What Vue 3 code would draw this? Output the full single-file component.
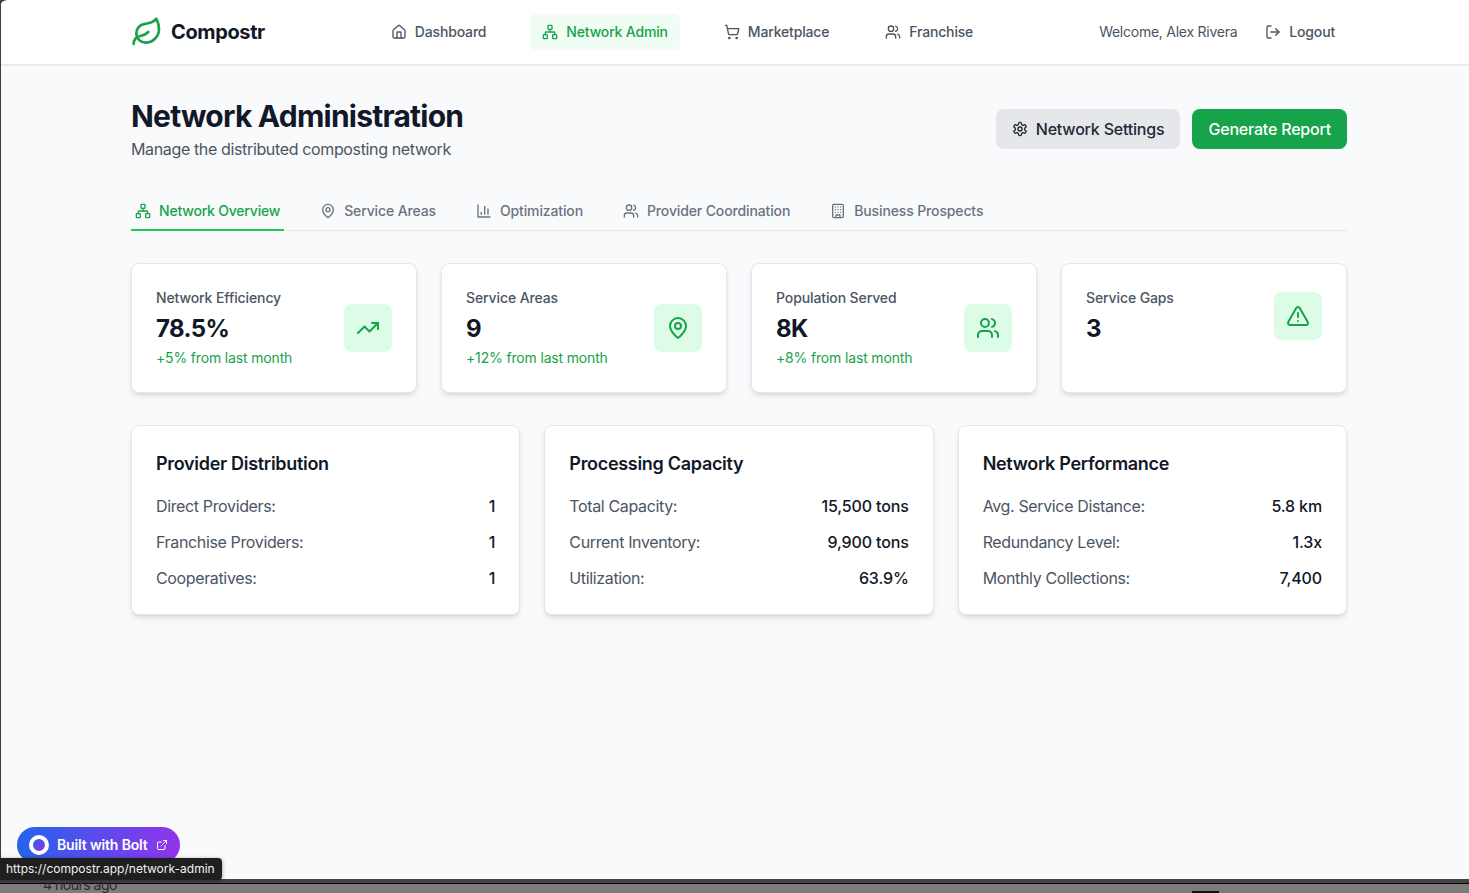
<script setup>
const icons = {
  leaf: '<path d="M11 20A7 7 0 0 1 9.8 6.1C15.5 5 17 4.48 19 2c1 2 2 4.18 2 8 0 5.5-4.78 10-10 10Z"/><path d="M2 21c0-3 1.85-5.36 5.08-6C9.5 14.52 12 13 13 12"/>',
  home: '<path d="M15 21v-8a1 1 0 0 0-1-1h-4a1 1 0 0 0-1 1v8"/><path d="M3 10a2 2 0 0 1 .709-1.528l7-5.999a2 2 0 0 1 2.582 0l7 5.999A2 2 0 0 1 21 10v9a2 2 0 0 1-2 2H5a2 2 0 0 1-2-2z"/>',
  network: '<rect x="16" y="16" width="6" height="6" rx="1"/><rect x="2" y="16" width="6" height="6" rx="1"/><rect x="9" y="2" width="6" height="6" rx="1"/><path d="M5 16v-3a1 1 0 0 1 1-1h12a1 1 0 0 1 1 1v3"/><path d="M12 12V8"/>',
  cart: '<circle cx="8" cy="21" r="1"/><circle cx="19" cy="21" r="1"/><path d="M2.05 2.05h2l2.66 12.42a2 2 0 0 0 2 1.58h9.78a2 2 0 0 0 1.95-1.57l1.65-7.43H5.12"/>',
  users: '<path d="M16 21v-2a4 4 0 0 0-4-4H6a4 4 0 0 0-4 4v2"/><circle cx="9" cy="7" r="4"/><path d="M22 21v-2a4 4 0 0 0-3-3.87"/><path d="M16 3.13a4 4 0 0 1 0 7.75"/>',
  logout: '<path d="M9 21H5a2 2 0 0 1-2-2V5a2 2 0 0 1 2-2h4"/><polyline points="16 17 21 12 16 7"/><line x1="21" y1="12" x2="9" y2="12"/>',
  settings: '<path d="M12.22 2h-.44a2 2 0 0 0-2 2v.18a2 2 0 0 1-1 1.73l-.43.25a2 2 0 0 1-2 0l-.15-.08a2 2 0 0 0-2.73.73l-.22.38a2 2 0 0 0 .73 2.73l.15.1a2 2 0 0 1 1 1.72v.51a2 2 0 0 1-1 1.74l-.15.09a2 2 0 0 0-.73 2.73l.22.38a2 2 0 0 0 2.73.73l.15-.08a2 2 0 0 1 2 0l.43.25a2 2 0 0 1 1 1.73V20a2 2 0 0 0 2 2h.44a2 2 0 0 0 2-2v-.18a2 2 0 0 1 1-1.73l.43-.25a2 2 0 0 1 2 0l.15.08a2 2 0 0 0 2.73-.73l.22-.39a2 2 0 0 0-.73-2.73l-.15-.08a2 2 0 0 1-1-1.74v-.5a2 2 0 0 1 1-1.74l.15-.09a2 2 0 0 0 .73-2.73l-.22-.38a2 2 0 0 0-2.73-.73l-.15.08a2 2 0 0 1-2 0l-.43-.25a2 2 0 0 1-1-1.73V4a2 2 0 0 0-2-2z"/><circle cx="12" cy="12" r="3"/>',
  pin: '<path d="M20 10c0 6-8 12-8 12s-8-6-8-12a8 8 0 0 1 16 0Z"/><circle cx="12" cy="10" r="3"/>',
  chart: '<path d="M3 3v18h18"/><path d="M8 17v-3"/><path d="M13 17V5"/><path d="M18 17V9"/>',
  building: '<rect x="4" y="2" width="16" height="20" rx="2"/><path d="M9 22v-4h6v4"/><path d="M8 6h.01M16 6h.01M12 6h.01M12 10h.01M12 14h.01M16 10h.01M16 14h.01M8 10h.01M8 14h.01"/>',
  trend: '<polyline points="22 7 13.5 15.5 8.5 10.5 2 17"/><polyline points="16 7 22 7 22 13"/>',
  alert: '<path d="m21.73 18-8-14a2 2 0 0 0-3.48 0l-8 14A2 2 0 0 0 4 21h16a2 2 0 0 0 1.73-3"/><path d="M12 9v4"/><path d="M12 17h.01"/>',
  external: '<path d="M15 3h6v6"/><path d="M10 14 21 3"/><path d="M18 13v6a2 2 0 0 1-2 2H5a2 2 0 0 1-2-2V8a2 2 0 0 1 2-2h6"/>'
}

const navLinks = [
  { label: 'Dashboard', icon: 'home' },
  { label: 'Network Admin', icon: 'network', active: true },
  { label: 'Marketplace', icon: 'cart' },
  { label: 'Franchise', icon: 'users' }
]

const tabs = [
  { label: 'Network Overview', icon: 'network', active: true },
  { label: 'Service Areas', icon: 'pin' },
  { label: 'Optimization', icon: 'chart' },
  { label: 'Provider Coordination', icon: 'users' },
  { label: 'Business Prospects', icon: 'building' }
]

const stats = [
  { label: 'Network Efficiency', value: '78.5%', note: '+5% from last month', icon: 'trend' },
  { label: 'Service Areas', value: '9', note: '+12% from last month', icon: 'pin' },
  { label: 'Population Served', value: '8K', note: '+8% from last month', icon: 'users' },
  { label: 'Service Gaps', value: '3', icon: 'alert' }
]

const panels = [
  { title: 'Provider Distribution', rows: [['Direct Providers:', '1'], ['Franchise Providers:', '1'], ['Cooperatives:', '1']] },
  { title: 'Processing Capacity', rows: [['Total Capacity:', '15,500 tons'], ['Current Inventory:', '9,900 tons'], ['Utilization:', '63.9%']] },
  { title: 'Network Performance', rows: [['Avg. Service Distance:', '5.8 km'], ['Redundancy Level:', '1.3x'], ['Monthly Collections:', '7,400']] }
]
</script>

<template>
  <div class="page">
    <header class="topbar">
      <div class="container bar-row">
        <div class="brand">
          <svg class="icon brand-icon" viewBox="0 0 24 24" v-html="icons.leaf"></svg>
          <span>Compostr</span>
        </div>
        <nav class="nav">
          <a v-for="l in navLinks" :key="l.label" class="nav-link" :class="{ active: l.active }">
            <svg class="icon i16" viewBox="0 0 24 24" v-html="icons[l.icon]"></svg>
            {{ l.label }}
          </a>
        </nav>
        <div class="user">
          <span class="welcome">Welcome, Alex Rivera</span>
          <a class="nav-link">
            <svg class="icon i16" viewBox="0 0 24 24" v-html="icons.logout"></svg>
            Logout
          </a>
        </div>
      </div>
    </header>

    <main class="container main">
      <section class="heading">
        <div>
          <h1>Network Administration</h1>
          <p>Manage the distributed composting network</p>
        </div>
        <div class="actions">
          <button class="btn btn-gray">
            <svg class="icon i16" viewBox="0 0 24 24" v-html="icons.settings"></svg>
            Network Settings
          </button>
          <button class="btn btn-green">Generate Report</button>
        </div>
      </section>

      <div class="tabs">
        <a v-for="t in tabs" :key="t.label" class="tab" :class="{ active: t.active }">
          <svg class="icon i16" viewBox="0 0 24 24" v-html="icons[t.icon]"></svg>
          {{ t.label }}
        </a>
      </div>

      <section class="stats">
        <article v-for="s in stats" :key="s.label" class="card stat">
          <div class="stat-text">
            <div class="stat-label">{{ s.label }}</div>
            <div class="stat-value">{{ s.value }}</div>
            <div v-if="s.note" class="stat-note">{{ s.note }}</div>
          </div>
          <div class="stat-icon" :class="{ top: !s.note }">
            <svg class="icon i24" viewBox="0 0 24 24" v-html="icons[s.icon]"></svg>
          </div>
        </article>
      </section>

      <section class="panels">
        <article v-for="p in panels" :key="p.title" class="card panel">
          <h3>{{ p.title }}</h3>
          <div class="rows">
            <div v-for="r in p.rows" :key="r[0]" class="row">
              <span>{{ r[0] }}</span>
              <strong>{{ r[1] }}</strong>
            </div>
          </div>
        </article>
      </section>
    </main>

    <div class="bolt">
      <span class="bolt-dot"></span>
      <span class="bolt-text">Built with Bolt</span>
      <svg class="icon i12" viewBox="0 0 24 24" v-html="icons.external"></svg>
    </div>

    <div class="window-edge"></div>
    <div class="window-corner"></div>
    <div class="below">
      <span>4 hours ago</span>
      <i class="below-mark"></i>
    </div>
    <div class="status-url">https://compostr.app/network-admin</div>
  </div>
</template>

<style scoped>
.page {
  position: relative;
  height: 893px;
  overflow: hidden;
  background: #f9fafb;
  font-family: Inter, "Liberation Sans", sans-serif;
  color: #111827;
}
.container {
  box-sizing: border-box;
  width: 1280px;
  margin-left: 99px;
  padding: 0 32px;
}
.icon {
  flex: none;
  fill: none;
  stroke: currentColor;
  stroke-width: 2;
  stroke-linecap: round;
  stroke-linejoin: round;
}
.i12 { width: 12px; height: 12px; }
.i16 { width: 16px; height: 16px; }
.i24 { width: 24px; height: 24px; }

.topbar {
  height: 65px;
  box-sizing: border-box;
  background: #fff;
  border-bottom: 1px solid #e5e7eb;
  box-shadow: 0 1px 2px rgba(0, 0, 0, .05);
}
.bar-row {
  display: flex;
  align-items: center;
  justify-content: space-between;
  height: 64px;
}
.brand {
  display: flex;
  align-items: center;
  gap: 8px;
  font-size: 20px;
  line-height: 28px;
  font-weight: 700;
  letter-spacing: -0.37px;
}
.brand-icon { width: 32px; height: 32px; color: #16a34a; }
.nav { display: flex; gap: 32px; }
.nav-link {
  display: flex;
  align-items: center;
  gap: 8px;
  box-sizing: border-box;
  height: 36px;
  padding: 0 12px 1px;
  border-radius: 6px;
  font-size: 14px;
  font-weight: 500;
  letter-spacing: -0.17px;
  color: #4b5563;
}
.nav-link.active { background: #f0fdf4; color: #16a34a; }
.user {
  display: flex;
  align-items: center;
  gap: 16px;
  font-size: 14px;
  color: #4b5563;
}
.welcome { letter-spacing: -0.25px; padding-bottom: 1px; }

.main { padding-top: 32px; }
.heading {
  display: flex;
  align-items: center;
  justify-content: space-between;
  margin-bottom: 32px;
}
h1 {
  margin: 0;
  font-size: 30px;
  line-height: 38px;
  font-weight: 700;
  letter-spacing: -0.77px;
}
.heading p {
  margin: 2px 0 0;
  font-size: 16px;
  line-height: 24px;
  letter-spacing: -0.36px;
  color: #4b5563;
}
.actions { display: flex; gap: 12px; }
.btn {
  display: flex;
  align-items: center;
  gap: 8px;
  height: 40px;
  padding: 0 16px;
  border: 0;
  border-radius: 8px;
  font: 500 16px/24px Inter, "Liberation Sans", sans-serif;
  letter-spacing: -0.2px;
}
.btn-gray { background: #e5e7eb; color: #1f2937; }
.btn-green { background: #16a34a; color: #fff; }

.tabs {
  display: flex;
  gap: 32px;
  margin-bottom: 32px;
  border-bottom: 1px solid #e5e7eb;
}
.tab {
  display: flex;
  align-items: center;
  gap: 8px;
  padding: 8px 4px;
  margin-bottom: -1px;
  border-bottom: 2px solid transparent;
  font-size: 14px;
  line-height: 20px;
  font-weight: 500;
  letter-spacing: -0.13px;
  color: #6b7280;
}
.tab.active { color: #16a34a; border-bottom-color: #22c55e; letter-spacing: -0.2px; }

.card {
  box-sizing: border-box;
  background: #fff;
  border: 1px solid #e5e7eb;
  border-radius: 8px;
  padding: 24px;
  box-shadow: 0 4px 6px -1px rgba(0, 0, 0, .1), 0 2px 4px -2px rgba(0, 0, 0, .1);
}
.stats {
  display: grid;
  grid-template-columns: repeat(4, 1fr);
  gap: 24px;
  margin-bottom: 32px;
}
.stat {
  display: flex;
  justify-content: space-between;
  align-items: center;
  height: 130px;
}
.stat-text { align-self: flex-start; }
.stat-label {
  font-size: 14px;
  line-height: 20px;
  font-weight: 500;
  letter-spacing: -0.11px;
  color: #4b5563;
}
.stat-value {
  margin-top: 4px;
  font-size: 24px;
  line-height: 34px;
  font-weight: 700;
  letter-spacing: -0.6px;
}
.stat-note {
  margin-top: 2px;
  font-size: 14px;
  line-height: 20px;
  letter-spacing: -0.16px;
  color: #16a34a;
}
.stat-icon {
  display: flex;
  align-items: center;
  justify-content: center;
  width: 48px;
  height: 48px;
  border-radius: 8px;
  background: #dcfce7;
  color: #16a34a;
}
.stat-icon.top { align-self: flex-start; margin-top: 4px; }

.panels {
  display: grid;
  grid-template-columns: repeat(3, 1fr);
  gap: 24px;
}
h3 {
  margin: 0 0 16px;
  font-size: 18px;
  line-height: 28px;
  font-weight: 600;
  letter-spacing: -0.3px;
}
.rows { display: flex; flex-direction: column; gap: 12px; }
.row {
  display: flex;
  justify-content: space-between;
  font-size: 16px;
  line-height: 24px;
  letter-spacing: -0.36px;
  color: #4b5563;
}
.row strong { font-weight: 500; letter-spacing: -0.14px; color: #111827; }

.bolt {
  position: absolute;
  left: 17px;
  top: 827px;
  display: flex;
  align-items: center;
  gap: 8px;
  box-sizing: border-box;
  width: 163px;
  height: 36px;
  padding: 0 12px;
  border-radius: 18px;
  background: linear-gradient(90deg, #2563eb, #9333ea);
  color: #fff;
  font-size: 14px;
  font-weight: 600;
}
.bolt-text { white-space: nowrap; letter-spacing: -0.15px; padding-bottom: 2px; }
.bolt-dot {
  flex: none;
  width: 12px;
  height: 12px;
  border: 4px solid #fff;
  border-radius: 50%;
  background: linear-gradient(135deg, #2563eb, #9333ea);
}
.window-edge {
  position: absolute;
  left: 0;
  top: 0;
  bottom: 0;
  width: 1px;
  background: #3f3f3f;
}
.window-corner {
  position: absolute;
  left: 0;
  top: 0;
  width: 6px;
  height: 6px;
  background: radial-gradient(circle at 100% 100%, transparent 5px, #3f3f3f 6px);
}
.below {
  position: absolute;
  left: 0;
  right: 0;
  top: 879px;
  height: 14px;
  box-sizing: border-box;
  overflow: hidden;
  background: #7c7c7c;
  border-top: 4px solid #444;
  box-shadow: inset 0 1px 0 #000;
  color: #2b2b2b;
}
.below span {
  position: absolute;
  left: 43px;
  top: -6px;
  font-size: 14px;
  line-height: 16px;
  letter-spacing: -0.5px;
}
.below-mark {
  position: absolute;
  left: 1192px;
  top: 8px;
  width: 27px;
  height: 2px;
  background: #111;
}
.status-url {
  position: absolute;
  left: 0;
  top: 858px;
  box-sizing: border-box;
  width: 222px;
  height: 22px;
  padding: 0 6px;
  border-radius: 0 4px 4px 0;
  background: #1f1f1f;
  color: #f2f2f2;
  font-family: Inter, "Liberation Sans", sans-serif;
  font-size: 12px;
  line-height: 22px;
  white-space: nowrap;
  box-shadow: 0 1px 4px rgba(0, 0, 0, .4);
}
</style>
